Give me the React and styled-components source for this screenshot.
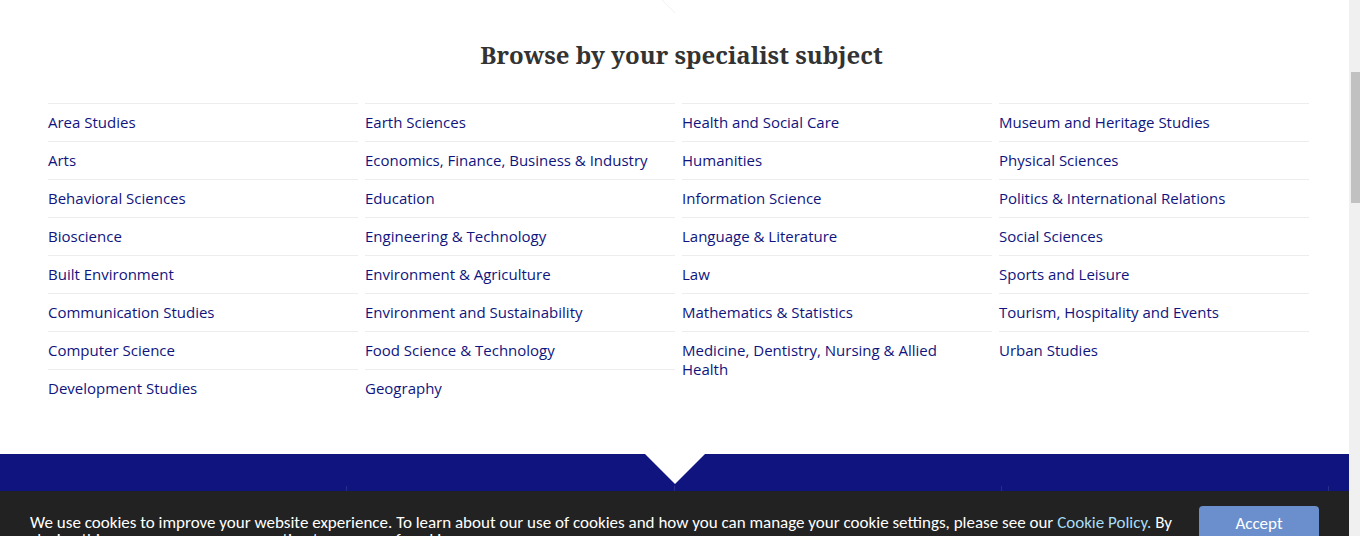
import React from 'react';
import styled, { createGlobalStyle } from 'styled-components';

const GlobalStyle = createGlobalStyle`
  *, *::before, *::after { box-sizing: border-box; }
  html, body { margin: 0; overflow: hidden; }
`;

const Viewport = styled.div`
  display: flex;
  height: 100vh;
  overflow: hidden;
  background: #fff;
`;

const Page = styled.div`
  flex: 1;
  min-width: 0;
  overflow: hidden;
`;

const Subjects = styled.section`
  position: relative;
  padding: 37px 40px 47px 48px;
`;

const PointerEdge = styled.svg`
  position: absolute;
  top: 0;
  left: 50%;
  margin-left: -30px;
`;

const Title = styled.h2`
  margin: 0 0 30px;
  padding-left: 6px;
  color: #333;
  font: 700 24px/36px 'Noto Serif', 'Droid Serif', 'DejaVu Serif', serif;
  text-align: center;
`;

const Columns = styled.div`
  display: grid;
  grid-template-columns: repeat(4, 1fr);
  column-gap: 7px;
  align-items: start;
`;

const SubjectList = styled.ul`
  list-style: none;
  margin: 0;
  padding: 0;
`;

const SubjectItem = styled.li`
  padding: 9px 20px 9px 0;
  border-top: 1px solid #ededed;
`;

const SubjectLink = styled.a`
  display: block;
  color: #10147e;
  font: 400 15px/19px 'Open Sans', 'Noto Sans', sans-serif;
  text-decoration: none;
  &:hover { text-decoration: underline; }
`;

const Band = styled.section`
  position: relative;
  height: 37px;
  padding: 0 20px;
  display: flex;
  align-items: flex-end;
  background: #10147e;
`;

const Notch = styled.span`
  position: absolute;
  top: 0;
  left: 50%;
  margin-left: -30px;
  border: 30px solid transparent;
  border-top-color: #fff;
  border-bottom: 0;
`;

const BandColumn = styled.div`
  flex: 1;
  height: 5px;
  border-right: 1px solid #282c8b;
`;

const CookieBar = styled.aside`
  display: flex;
  align-items: flex-start;
  gap: 20px;
  padding: 15px 30px;
  background: #222;
  color: #fff;
  font: 400 17px/17px Carlito, Calibri, Lato, sans-serif;
`;

const CookieText = styled.p`
  flex: 1;
  margin: 0;
  padding-top: 8px;
`;

const PolicyLink = styled.a`
  color: #a7def8;
  text-decoration: none;
`;

const AcceptButton = styled.button`
  width: 120px;
  height: 34px;
  padding: 0;
  border: 0;
  border-radius: 4px;
  background: #6a8fcc;
  color: #fff;
  font: inherit;
  cursor: pointer;
`;

const ScrollTrack = styled.div`
  width: 11px;
  padding: 72px 0 0 2px;
  background: #f0f0f0;
`;

const ScrollThumb = styled.div`
  height: 131px;
  background: #c1c1c1;
`;

const columns = [
  ['Area Studies', 'Arts', 'Behavioral Sciences', 'Bioscience', 'Built Environment', 'Communication Studies', 'Computer Science', 'Development Studies'],
  ['Earth Sciences', 'Economics, Finance, Business & Industry', 'Education', 'Engineering & Technology', 'Environment & Agriculture', 'Environment and Sustainability', 'Food Science & Technology', 'Geography'],
  ['Health and Social Care', 'Humanities', 'Information Science', 'Language & Literature', 'Law', 'Mathematics & Statistics', 'Medicine, Dentistry, Nursing & Allied Health'],
  ['Museum and Heritage Studies', 'Physical Sciences', 'Politics & International Relations', 'Social Sciences', 'Sports and Leisure', 'Tourism, Hospitality and Events', 'Urban Studies'],
];

export default function App() {
  return (
    <>
      <GlobalStyle />
      <Viewport>
        <Page>
          <Subjects>
            <PointerEdge width="60" height="14" viewBox="0 0 60 14" aria-hidden="true">
              <path d="M17 0 L30 13" fill="none" stroke="#f2f2f2" />
            </PointerEdge>
            <Title>Browse by your specialist subject</Title>
            <Columns>
              {columns.map((items) => (
                <SubjectList key={items[0]}>
                  {items.map((name) => (
                    <SubjectItem key={name}>
                      <SubjectLink href="#">{name}</SubjectLink>
                    </SubjectItem>
                  ))}
                </SubjectList>
              ))}
            </Columns>
          </Subjects>
          <Band>
            <BandColumn />
            <BandColumn />
            <BandColumn />
            <BandColumn />
            <Notch />
          </Band>
          <CookieBar>
            <CookieText>
              We use cookies to improve your website experience. To learn about our use of cookies and how you can
              manage your cookie settings, please see our <PolicyLink href="#">Cookie Policy.</PolicyLink> By closing
              this message, you are consenting to our use of cookies.
            </CookieText>
            <AcceptButton type="button">Accept</AcceptButton>
          </CookieBar>
        </Page>
        <ScrollTrack>
          <ScrollThumb />
        </ScrollTrack>
      </Viewport>
    </>
  );
}
